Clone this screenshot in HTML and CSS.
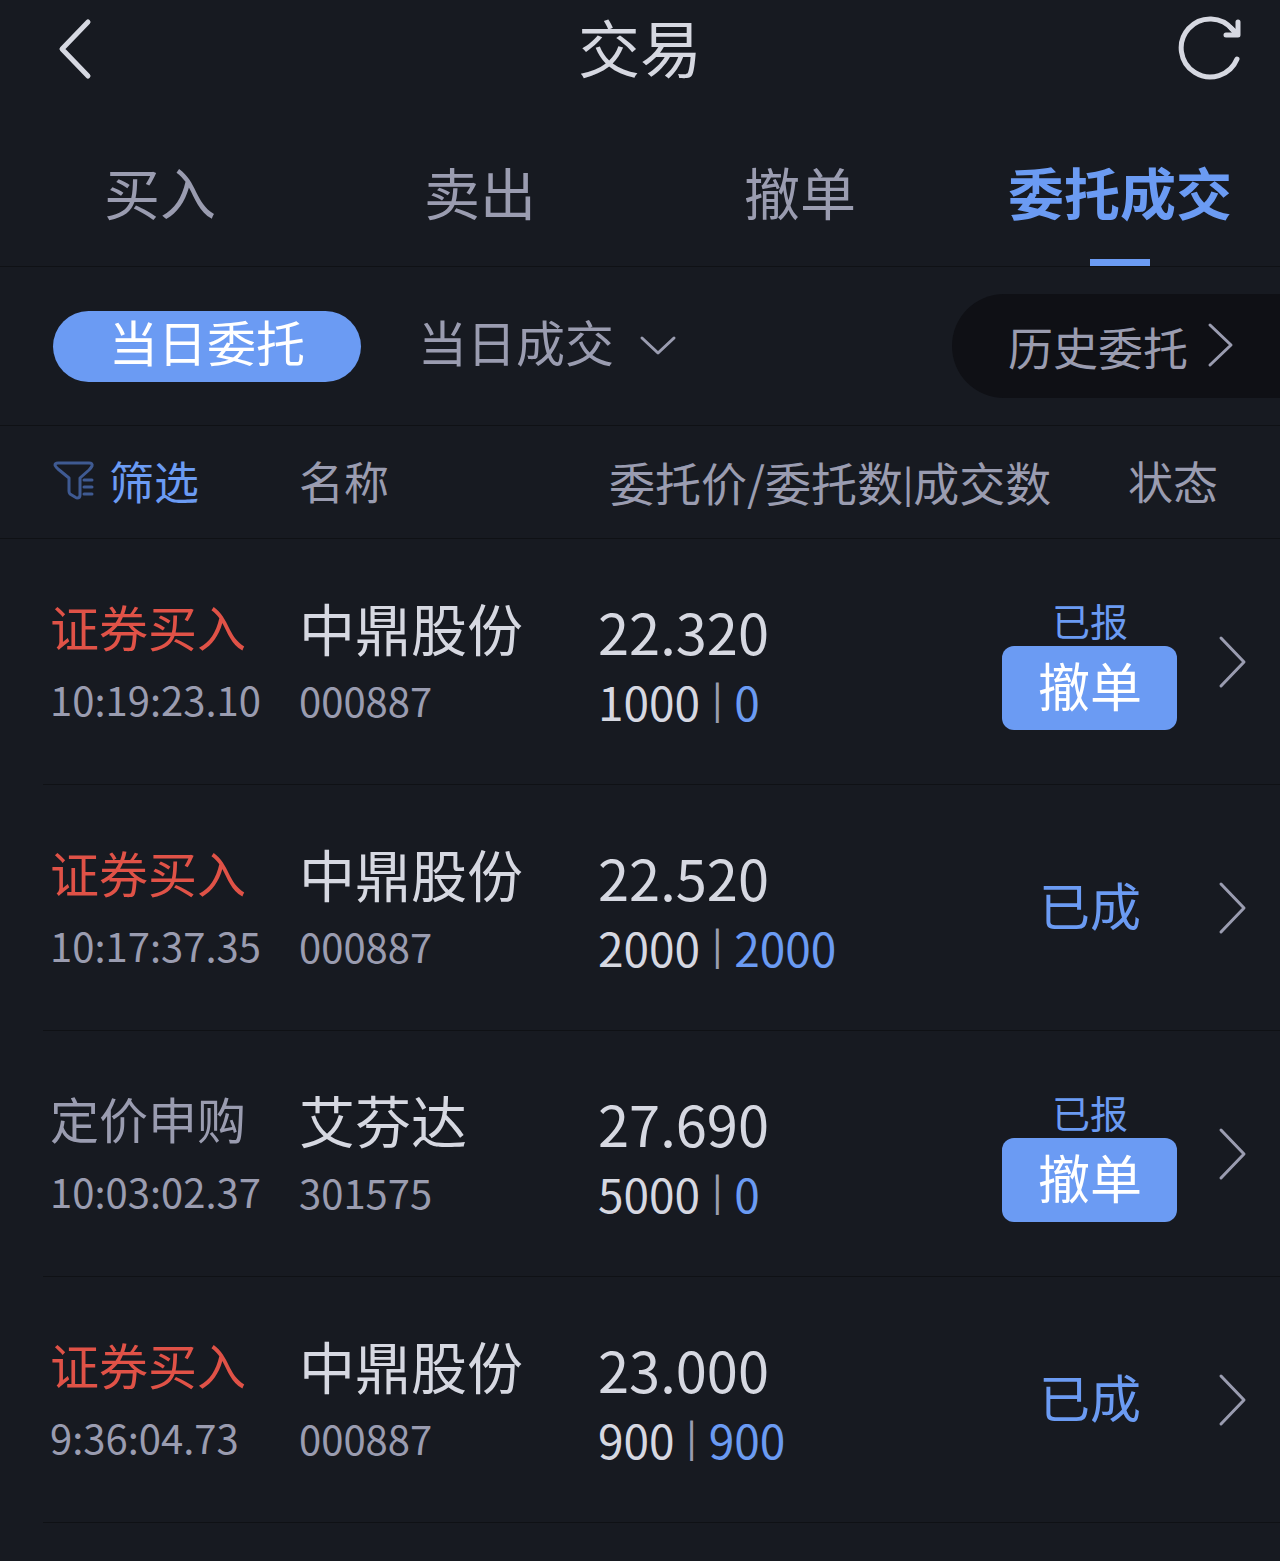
FILE: index.html
```html
<!DOCTYPE html>
<html lang="zh-CN">
<head>
    <meta charset="UTF-8">
    <meta name="viewport" content="width=device-width, initial-scale=1">
    <title>交易</title>
    <link rel="stylesheet" href="styles.css">
</head>
<body>
<header class="header">
    <button class="icon-btn" type="button" aria-label="返回">
        <svg width="36" height="64" viewBox="0 0 36 64"><path d="M32 6L6 33L32 60"/></svg>
    </button>
    <h1>交易</h1>
    <button class="icon-btn" type="button" aria-label="刷新">
        <svg class="refresh" width="68" height="68" viewBox="0 0 68 68">
            <path d="M61 45A29 29 0 1 1 57 16"/>
            <path d="M62 8V21H50M55 14L61 20"/>
        </svg>
    </button>
</header>

<nav class="tabs">
    <a href="#buy">买入</a>
    <a href="#sell">卖出</a>
    <a href="#cancel">撤单</a>
    <a href="#orders" class="on">委托成交</a>
</nav>

<div class="sub">
    <button class="pill" type="button">当日委托</button>
    <button class="deal" type="button"><span>当日成交</span>
        <svg width="40" height="24" viewBox="0 0 40 24"><path d="M4 4L20 19L36 4"/></svg>
    </button>
    <a class="history" href="#history">历史委托
        <svg width="30" height="48" viewBox="0 0 30 48"><path d="M4 3L25 23L4 43"/></svg>
    </a>
</div>

<table class="orders">
    <colgroup>
        <col class="c-type">
        <col class="c-name">
        <col>
        <col class="c-status">
        <col class="c-more">
    </colgroup>
    <thead>
    <tr>
        <th>
            <button class="filter" type="button">
                <svg width="42" height="42" viewBox="0 0 42 42">
                    <path d="M5 3H36Q40 3 39 6Q38 8 36 10L27 18V35Q27 38 24 38Q23 38 22 37L17 34Q16 33 16 31V18L5 9Q2 6 2 5Q2 3 5 3Z"/>
                    <path d="M31 20H39M31 27H39M31 34H39"/>
                </svg>筛选
            </button>
        </th>
        <th>名称</th>
        <th class="th-price">委托价/委托数<span class="sep">|</span>成交数</th>
        <th class="th-status" colspan="2">状态</th>
    </tr>
    </thead>
    <tbody>
    <tr>
        <td class="type buy"><p>证券买入</p><small>10:19:23.10</small></td>
        <td class="name"><p>中鼎股份</p><small>000887</small></td>
        <td class="price"><p>22.320</p><div class="num">1000<span class="sep">|</span><b>0</b></div></td>
        <td class="status"><span class="sent">已报</span><button class="cancel" type="button">撤单</button></td>
        <td class="more"><a href="#order1" aria-label="详情"><svg width="30" height="56" viewBox="0 0 30 56"><path d="M3 4L26 28L3 52"/></svg></a></td>
    </tr>
    <tr>
        <td class="type buy"><p>证券买入</p><small>10:17:37.35</small></td>
        <td class="name"><p>中鼎股份</p><small>000887</small></td>
        <td class="price"><p>22.520</p><div class="num">2000<span class="sep">|</span><b>2000</b></div></td>
        <td class="status done">已成</td>
        <td class="more"><a href="#order2" aria-label="详情"><svg width="30" height="56" viewBox="0 0 30 56"><path d="M3 4L26 28L3 52"/></svg></a></td>
    </tr>
    <tr>
        <td class="type"><p>定价申购</p><small>10:03:02.37</small></td>
        <td class="name"><p>艾芬达</p><small>301575</small></td>
        <td class="price"><p>27.690</p><div class="num">5000<span class="sep">|</span><b>0</b></div></td>
        <td class="status"><span class="sent">已报</span><button class="cancel" type="button">撤单</button></td>
        <td class="more"><a href="#order3" aria-label="详情"><svg width="30" height="56" viewBox="0 0 30 56"><path d="M3 4L26 28L3 52"/></svg></a></td>
    </tr>
    <tr>
        <td class="type buy"><p>证券买入</p><small>9:36:04.73</small></td>
        <td class="name"><p>中鼎股份</p><small>000887</small></td>
        <td class="price"><p>23.000</p><div class="num">900<span class="sep">|</span><b>900</b></div></td>
        <td class="status done">已成</td>
        <td class="more"><a href="#order4" aria-label="详情"><svg width="30" height="56" viewBox="0 0 30 56"><path d="M3 4L26 28L3 52"/></svg></a></td>
    </tr>
    </tbody>
</table>
</body>
</html>
```
FILE: styles.css
```css
*{
    margin:0;
    padding:0;
    box-sizing:border-box;
}
body{
    background:#171a21;
    color:#9a9cb0;
    font-family:"Noto Sans CJK SC",sans-serif;
}
a{
    color:inherit;
    text-decoration:none;
}
button{
    border:0;
    background:none;
    color:inherit;
    font:inherit;
    cursor:pointer;
}
svg{
    display:block;
    fill:none;
    stroke:currentColor;
    stroke-width:3;
    stroke-linecap:round;
    stroke-linejoin:round;
}

/* 顶部标题 */
.header{
    display:flex;
    justify-content:space-between;
    align-items:center;
    height:96px;
    padding:0 36px 0 56px;
    color:#d6d8e1;
}
.header h1{
    flex:1;
    padding-bottom:4px;
    font-size:62px;
    font-weight:400;
    line-height:88px;
    text-align:center;
}
.header .icon-btn{
    display:flex;
    width:68px;
}
.header svg{
    stroke-width:5;
}
.header .icon-btn:first-child{
    width:48px;
}

/* 一级菜单 */
.tabs{
    display:grid;
    grid-template-columns:repeat(4,1fr);
    border-bottom:1px solid #0f1115;
}
.tabs a{
    height:170px;
    border-bottom:7px solid transparent;
    font-size:56px;
    line-height:190px;
    text-align:center;
}
.tabs .on{
    color:#6b9bf3;
    font-weight:700;
    background:linear-gradient(#6b9bf3,#6b9bf3) center bottom/60px 7px no-repeat border-box;
}

/* 二级菜单 */
.sub{
    display:flex;
    align-items:center;
    height:159px;
    padding-left:53px;
    border-bottom:1px solid #0f1115;
    font-size:49px;
}
.sub .pill{
    width:308px;
    height:71px;
    padding-bottom:10px;
    border-radius:36px;
    background:#6b9bf3;
    color:#fff;
    line-height:60px;
}
.sub .deal{
    display:flex;
    align-items:center;
    gap:24px;
    margin-left:57px;
    line-height:60px;
}
.deal span{
    padding-bottom:10px;
}
.sub .history{
    display:flex;
    align-items:center;
    gap:18px;
    height:104px;
    margin-left:auto;
    padding:0 44px 0 56px;
    border-radius:52px 0 0 52px;
    background:#0f1015;
    font-size:45px;
}

/* 委托列表 */
.orders{
    width:100%;
    table-layout:fixed;
    border-collapse:separate;
    border-spacing:0;
}
.c-type,.c-name{
    width:299px;
}
.c-status{
    width:200px;
}
.c-more{
    width:90px;
}
.orders th{
    height:113px;
    padding-bottom:2px;
    border-bottom:1px solid #0f1115;
    font-size:45px;
    font-weight:400;
    line-height:64px;
    text-align:left;
    white-space:nowrap;
}
.orders .th-price{
    padding-left:11px;
    font-size:46px;
}
.orders .th-status{
    padding-right:62px;
    text-align:right;
}
.filter{
    display:flex;
    align-items:center;
    gap:14px;
    padding-left:53px;
    color:#6b9bf3;
}
.filter svg{
    color:#3f5a92;
}
.sep{
    font-size:36px;
    font-weight:500;
    line-height:1;
    vertical-align:4px;
}
tbody tr{
    background:linear-gradient(#0f1115,#0f1115) 43px bottom/100% 1px no-repeat;
}
.orders td{
    height:246px;
    vertical-align:top;
}
.orders small{
    display:block;
    font-size:40px;
    line-height:75px;
}
.orders .type{
    padding:50px 0 0 50px;
    font-size:49px;
    line-height:73px;
}
.buy p{
    color:#e05247;
}
.orders .name{
    padding-top:51px;
    font-size:56px;
    line-height:73px;
}
.name p,.price{
    color:#d6d8e1;
}
.orders .price{
    padding-top:58px;
    font-size:56px;
    line-height:68px;
}
.price .num{
    display:flex;
    gap:12px;
    font-size:46px;
    line-height:72px;
}
.num b{
    color:#6b9bf3;
    font-weight:400;
}
.num .sep{
    color:#9a9cb0;
    line-height:64px;
}
.orders .status{
    vertical-align:middle;
    color:#6b9bf3;
    font-size:51px;
    text-align:center;
}
.orders .done{
    padding-bottom:8px;
}
.status .sent{
    display:block;
    font-size:38px;
    line-height:52px;
}
.status .cancel{
    display:block;
    width:175px;
    height:84px;
    margin:0 auto;
    padding-bottom:6px;
    border-radius:12px;
    background:#6b9bf3;
    color:#fff;
    font-size:52px;
    line-height:78px;
}
.orders .more{
    padding-left:28px;
    vertical-align:middle;
}
```
